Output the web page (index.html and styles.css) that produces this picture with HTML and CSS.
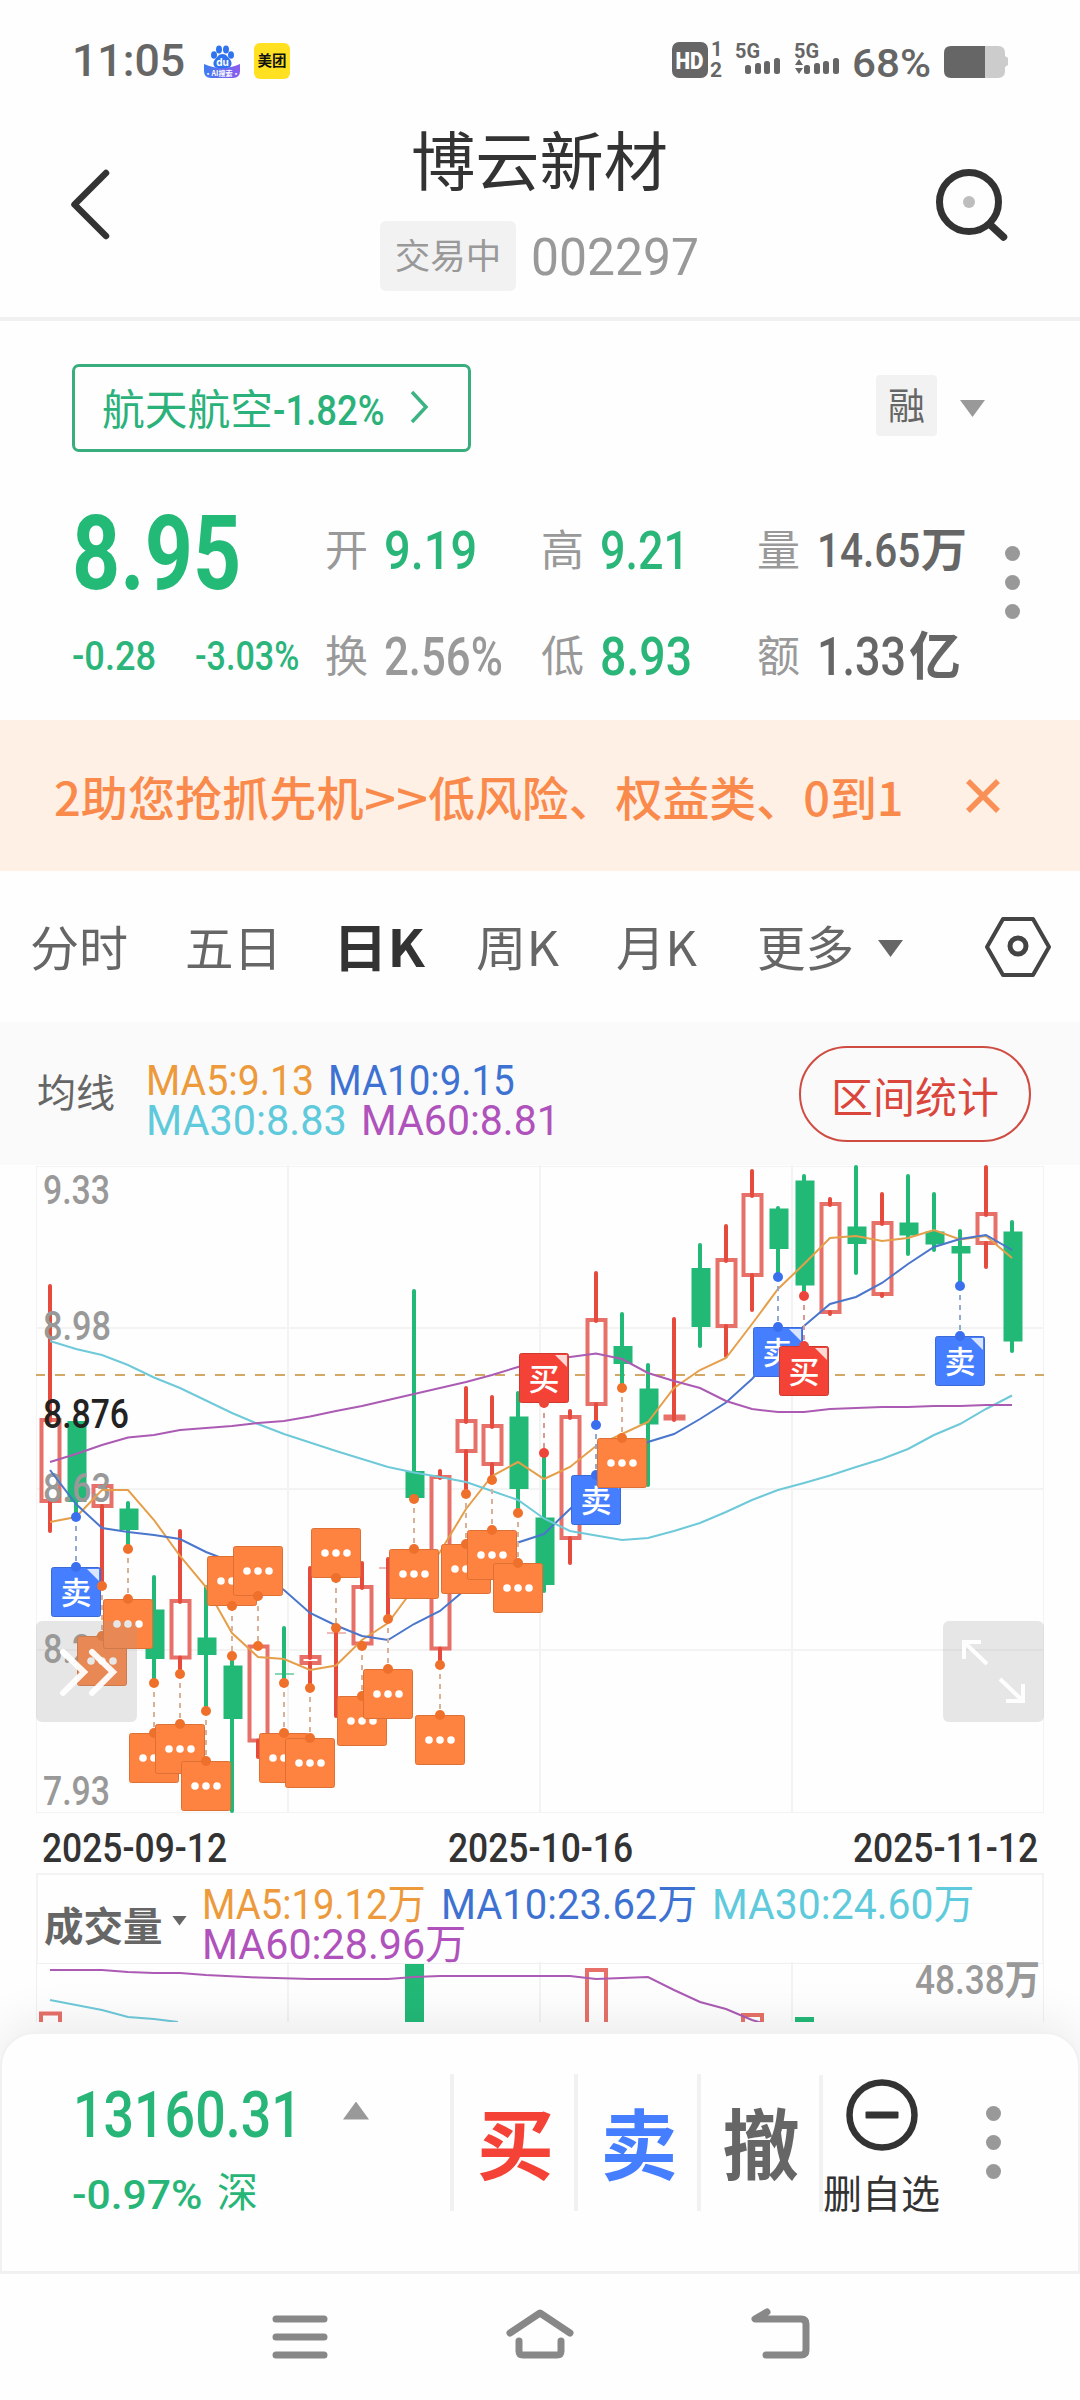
FILE: index.html
```html
<!DOCTYPE html>
<html lang="zh-CN">
<head>
<meta charset="utf-8">
<title>博云新材 002297</title>
<link rel="stylesheet" href="styles.css">
</head>
<body>
<div class="status">
  <div class="status-left">
    <span class="clock" data-w="113">11:05</span>
    <svg class="app-baidu" width="38" height="38" viewBox="0 0 38 38">
      <defs><linearGradient id="bd" x1="0" x2="1"><stop offset="0" stop-color="#3f7cf0"/><stop offset="1" stop-color="#8a5cf0"/></linearGradient></defs>
      <path d="M1 22q18 8 36 0v7q0 7-7 7H8q-7 0-7-7z" fill="url(#bd)"/>
      <g fill="#2f74ee"><ellipse cx="11" cy="13" rx="3" ry="3.8"/><ellipse cx="16" cy="7.500" rx="3" ry="4"/><ellipse cx="23" cy="7.500" rx="3" ry="4"/><ellipse cx="28" cy="13" rx="3" ry="3.800"/><path d="M19.500 12c4 0 5 3 7.500 5.500 3 3.500 1.500 8.500-3 8.500h-9c-4.500 0-6-5-3-8.500 2.500-2.500 3.500-5.500 7.500-5.500z"/></g>
      <text class="du" x="19.500" y="23.500" text-anchor="middle">du</text>
      <text class="ai" x="19" y="34" text-anchor="middle">·AI搜索·</text>
    </svg>
    <span class="app-meituan">美团</span>
  </div>
  <svg class="status-right" width="352" height="60" viewBox="670 30 352 60">
    <rect x="672" y="42" width="36" height="36" rx="7" fill="#666"/>
    <g class="sig-text">
      <text class="hd" x="675.500" y="69" textLength="28" lengthAdjust="spacingAndGlyphs">HD</text>
      <text class="sub" x="711" y="56">1</text><text class="sub" x="710" y="77" textLength="12" lengthAdjust="spacingAndGlyphs">2</text>
      <text class="fiveg" x="735" y="58" textLength="25" lengthAdjust="spacingAndGlyphs">5G</text>
      <text class="fiveg" x="794" y="58" textLength="25" lengthAdjust="spacingAndGlyphs">5G</text>
      <text class="batt" x="852" y="77" textLength="79" lengthAdjust="spacingAndGlyphs">68%</text>
    </g>
    <g fill="#666">
      <rect x="745" y="65" width="6" height="9" rx="2.500"/><rect x="755" y="63" width="6" height="11" rx="2.500"/><rect x="764" y="61" width="6" height="13" rx="2.500"/><rect x="774" y="58" width="6" height="16" rx="2.500"/>
      <path d="M795 65l4-6 4 6zM795 68h8l-4 6z"/>
      <rect x="804" y="65" width="6" height="9" rx="2.500"/><rect x="814" y="63" width="6" height="11" rx="2.500"/><rect x="823" y="61" width="6" height="13" rx="2.500"/><rect x="833" y="58" width="6" height="16" rx="2.500"/>
    </g>
    <path d="M985 46h13q7 0 7 7v3l3 2v7l-3 2v4q0 7-7 7h-13z" fill="#ccc"/>
    <path d="M985 46v32h-34q-7 0-7-7V53q0-7 7-7z" fill="#666"/>
  </svg>
</div>

<header class="header">
  <svg width="50" height="80" viewBox="66 165 50 80"><path d="M106 174L74.500 205.500L106 237" fill="none" stroke="#333" stroke-width="6.500" stroke-linecap="round" stroke-linejoin="round"/></svg>
  <div class="heading">
    <h1 class="title" data-w="257">博云新材</h1>
    <div class="code-row"><span class="tag">交易中</span><span class="code" data-w="168">002297</span></div>
  </div>
  <svg width="76" height="80" viewBox="932 164 76 80"><g fill="none" stroke="#333"><circle cx="969" cy="202" r="29.500" stroke-width="7"/><path d="M990.500 225l13 12" stroke-width="7.500" stroke-linecap="round"/></g><circle cx="969" cy="202" r="6" fill="#bdbdbd"/></svg>
</header>

<section class="quote">
  <div class="sector-row">
    <div class="sector"><span data-w="171">航天航空</span><b class="num" data-w="112">-1.82%</b>
      <svg width="22" height="38" viewBox="0 0 22 38"><path d="M3 4l14 15L3 34" fill="none" stroke="#3db384" stroke-width="3.500"/></svg></div>
    <div class="margin-flag"><span>融</span><i class="tri-down"></i></div>
  </div>
  <div class="quote-grid">
    <div class="price num" data-w="169">8.95</div>
    <div class="stat"><label>开</label><b class="num up" data-w="93">9.19</b></div>
    <div class="stat"><label>高</label><b class="num up" data-w="89">9.21</b></div>
    <div class="stat"><label>量</label><b class="num vol" data-w="103">14.65</b><b class="unit">万</b></div>
    <div class="change"><b class="num" data-w="84">-0.28</b><b class="num" data-w="104">-3.03%</b></div>
    <div class="stat"><label>换</label><b class="num mute" data-w="119">2.56%</b></div>
    <div class="stat"><label>低</label><b class="num up" data-w="92">8.93</b></div>
    <div class="stat"><label>额</label><b class="num amt" data-w="89">1.33</b><b class="unit big">亿</b></div>
    <div class="dots quote-dots"><i></i><i></i><i></i></div>
  </div>
</section>

<section class="notice">
  <div class="notice-text"><span data-w="310">2助您抢抓先机</span><span data-w="64">&gt;&gt;</span><span data-w="476">低风险、权益类、0到1</span></div>
  <svg width="38" height="38" viewBox="0 0 38 38"><path d="M4 4l30 30M34 4L4 34" stroke="#f99055" stroke-width="5.500"/></svg>
</section>

<nav class="tabs">
  <span data-w="98">分时</span><span data-w="97">五日</span><span class="active" data-w="92">日K</span><span data-w="83">周K</span><span class="month" data-w="81">月K</span><span class="more" data-w="97">更多</span><i class="tri-down dark"></i>
  <svg width="70" height="64" viewBox="0 0 70 64"><path d="M20 4h30l16 28-16 28H20L4 32z" fill="none" stroke="#444" stroke-width="4" stroke-linejoin="round"/><circle cx="35" cy="31" r="8" fill="none" stroke="#444" stroke-width="5"/></svg>
</nav>

<section class="ma-bar">
  <span class="ma-name">均线</span>
  <div class="ma-list">
    <div><span class="c5" data-w="168">MA5:9.13</span><span class="c10" data-w="187">MA10:9.15</span></div>
    <div><span class="c30" data-w="201">MA30:8.83</span><span class="c60" data-w="199">MA60:8.81</span></div>
  </div>
  <span class="range-btn">区间统计</span>
</section>

<svg id="kline" width="1080" height="653" viewBox="0 1165 1080 653"></svg>
<div class="dates"><span class="num" data-w="185">2025-09-12</span><span class="num" data-w="185">2025-10-16</span><span class="num" data-w="185">2025-11-12</span></div>

<section class="vol-head">
  <b class="vol-name">成交量</b><i class="tri-down small"></i>
  <div class="ma-list">
    <div><span class="c5" data-w="224">MA5:19.12万</span><span class="c10" data-w="256">MA10:23.62万</span><span class="c30" data-w="262">MA30:24.60万</span></div>
    <div><span class="c60" data-w="264">MA60:28.96万</span></div>
  </div>
</section>
<svg id="volume" width="1080" height="60" viewBox="0 1962 1080 60"></svg>

<footer class="trade">
  <div class="index">
    <div class="index-top"><b class="num" data-w="229">13160.31</b><i class="tri-up"></i></div>
    <div class="index-sub"><b class="num" data-w="130">-0.97%</b><span>深</span></div>
  </div>
  <div class="act buy">买</div>
  <div class="act sell">卖</div>
  <div class="act cancel">撤</div>
  <div class="fav">
    <svg width="74" height="74" viewBox="0 0 74 74"><circle cx="37" cy="37" r="32.500" fill="none" stroke="#333" stroke-width="6.500"/><rect x="20.500" y="33.500" width="33" height="7" rx="1" fill="#333"/></svg>
    <span>删自选</span>
  </div>
  <div class="dots"><i></i><i></i><i></i></div>
</footer>

<nav class="sysnav">
  <svg width="600" height="70" viewBox="240 2300 600 70" fill="none" stroke="#888" stroke-width="7" stroke-linecap="round" stroke-linejoin="round">
    <path d="M276 2319h48M276 2337h48M276 2355h48"/>
    <path d="M510 2333l30-20 30 20" /><path d="M519 2341v10q0 4 4 4h34q4 0 4-4v-10"/>
    <path d="M767 2312l-12 7h46q5 0 5 5v26q0 5-5 5h-35"/>
  </svg>
</nav>
<script src="app.js"></script>
</body>
</html>
```
FILE: styles.css
```css
* { box-sizing: border-box; }
body {
  margin: 0; width: 1080px; height: 2400px; overflow: hidden; background: #fefefe;
  font-family: Roboto, "Noto Sans CJK SC", sans-serif; color: #666;
}
svg { display: block; flex: none; }
i { font-style: normal; }
b { font-weight: 500; }
.num { font-family: Roboto, sans-serif; font-weight: 500; }
.fit { display: inline-block; flex: none; white-space: nowrap; }
.fit > span { display: inline-block; transform-origin: left center; }

.status { height: 94px; padding: 30px 58px 0 72px; display: flex; justify-content: space-between; align-items: flex-start; }
.status-left { display: flex; align-items: flex-start; padding-top: 10px; }
.clock { font-size: 45px; line-height: 40px; font-weight: 500; margin-top: 1px; }
.app-baidu { margin: 2px 0 0 18px; }
.du { font: 700 10px Inter, sans-serif; fill: #fff; }
.ai { font: 700 7px "Noto Sans CJK SC", sans-serif; fill: #fff; }
.app-meituan { width: 36px; height: 36px; margin: 3px 0 0 13px; border-radius: 6px; background: #ffe122; color: #111; font: 700 14.5px/33px "Noto Sans CJK SC", sans-serif; text-align: center; }
.sig-text { fill: #666; font-family: Roboto, sans-serif; font-weight: 700; }
.sig-text .hd { fill: #fff; font-size: 24px; font-weight: 900; }
.sig-text .sub { font-size: 20px; }
.sig-text .fiveg { font-size: 20px; }
.sig-text .batt { font-size: 38px; font-weight: 500; }

.header { height: 227px; padding: 0 72px 4px 66px; border-bottom: 4px solid #f1f1f1; display: flex; justify-content: space-between; align-items: center; }
.heading { align-self: flex-start; padding-top: 28px; display: flex; flex-direction: column; align-items: center; margin-left: 31px; }
.title { margin: 0; font-size: 64px; line-height: 84px; font-weight: 400; color: #333; }
.code-row { display: flex; align-items: center; gap: 15px; margin-top: 15px; height: 70px; }
.tag { width: 136px; height: 70px; border-radius: 6px; background: #f2f2f2; color: #999; font-size: 35.5px; line-height: 73px; text-align: center; }
.code { font-size: 51px; line-height: 70px; color: #999; margin-top: 3px; }

.quote { height: 399px; padding: 43px 0 0 72px; }
.sector-row { display: flex; justify-content: space-between; align-items: flex-start; padding-right: 95px; }
.sector { width: 399px; height: 88px; border: 3px solid #3aad7e; border-radius: 7px; padding-left: 27px; display: flex; align-items: center; color: #2bb27b; font-size: 42.5px; line-height: 84px; }
.sector > span { margin-top: 5px; }
.sector svg { margin-left: 24px; margin-top: -2px; }
.sector .num { font-size: 43px; line-height: 84px; margin-top: 4px; }
.margin-flag { display: flex; align-items: center; gap: 23px; margin-top: 11px; }
.margin-flag span { width: 61px; height: 61px; border-radius: 4px; background: #f2f2f2; font-size: 37px; line-height: 66px; text-align: center; }
.tri-down { flex: none; width: 25px; height: 17px; background: #999; clip-path: polygon(0 0, 100% 0, 50% 100%); }
.margin-flag .tri-down { margin-top: 6px; }
.tri-down.dark { background: #666; margin-top: 4px; }
.tri-down.small { width: 15px; height: 10px; background: #666; }
.tri-up { width: 26px; height: 18px; background: #999; clip-path: polygon(50% 0, 100% 100%, 0 100%); }
.quote-grid { padding-top: 45px; display: grid; grid-template-columns: 253px 216px 216px 246px 30px; grid-template-rows: 106px 106px; align-items: center; }
.price { color: #23b977; font-size: 103px; line-height: 106px; font-weight: 700; margin-top: 8px; }
.change { display: flex; gap: 39px; color: #2bb57b; font-size: 41px; }
.stat { display: flex; align-items: center; line-height: 60px; }
.stat label { font-size: 43px; color: #999; width: 59px; margin-top: 1px; }
.stat .num { font-size: 54px; margin-top: 1px; }
.stat .up { color: #2ab679; }
.stat .mute { color: #999; }
.stat .vol { font-size: 48px; margin-left: 1px; }
.stat .amt { margin-left: 1px; }
.unit { font-size: 46px; font-weight: 700; margin-left: 1px; }
.unit.big { font-size: 52px; margin-left: 3px; margin-top: 4px; }
.dots { display: flex; flex-direction: column; gap: 14px; align-items: center; }
.dots i { width: 15px; height: 15px; border-radius: 50%; background: #999; }
.quote-dots { grid-column: 5; grid-row: 1 / 3; margin-top: -41px; padding-right: 12px; }

.notice { height: 151px; background: #fff0e6; padding: 0 78px 0 54px; display: flex; align-items: center; justify-content: space-between; color: #f98a4c; font: 500 46.5px/70px "Noto Sans CJK SC", sans-serif; }
.notice-text { display: flex; margin-top: 1px; }

.tabs { height: 151px; padding: 0 27px 0 30px; display: flex; align-items: center; font: 400 48px/70px "Noto Sans CJK SC", sans-serif; }
.tabs > span { margin-right: 57px; margin-top: -4px; }
.tabs > span:nth-child(2) { margin-right: 51px; }
.tabs > .active { font-weight: 700; font-size: 51px; color: #333; margin-right: 51px; }
.tabs > .month { margin-right: 60px; }
.tabs > .more { margin-right: 24px; }
.tabs svg { margin-left: auto; }

.ma-bar { height: 143px; background: #fafafa; padding: 0 49px 0 37px; display: flex; align-items: center; }
.ma-name { font-size: 39px; width: 109px; margin-top: -7px; }
.ma-list { font-size: 42px; line-height: 40px; }
.ma-list > div { display: flex; gap: 14px; height: 40px; }
.ma-bar .ma-list { padding-top: 15px; }
.c5 { color: #ec9a3c; }
.c10 { color: #3e72d2; }
.c30 { color: #5fcadb; }
.c60 { color: #b052bb; }
.range-btn { margin-left: auto; width: 232px; height: 96px; border: 2px solid #cf4c43; border-radius: 48px; color: #db463c; font-size: 42px; line-height: 101px; text-align: center; }

.dates { height: 55px; padding: 6px 42px 0 42px; display: flex; justify-content: space-between; color: #333; font-size: 40px; line-height: 49px; }
.vol-head { height: 89px; margin: 0 36px; border: 2px solid #f3f3f3; border-bottom: 0; display: flex; align-items: center; }
.vol-name { font-size: 39.5px; font-weight: 700; width: 127px; padding-left: 6px; margin-top: 9px; white-space: nowrap; }
.vol-head .tri-down { margin: 4px 15px 0 7px; }
.vol-head .ma-list { padding-top: 10px; height: 87px; }
.vol-head .ma-list > div { gap: 15px; }

.trade { position: relative; margin-top: 10px; height: 242px; border: 2px solid #f1f1f1; border-bottom-width: 3px; border-radius: 34px 34px 0 0; background: #fefefe; box-shadow: 0 -6px 50px rgba(0, 0, 0, .09); display: flex; padding: 41px 0 0 0; }
.index { width: 448px; padding-left: 72px; color: #27b678; }
.index-top { display: flex; align-items: center; gap: 40px; font-size: 65px; height: 80px; line-height: 80px; }
.index-top .num { margin-left: -1px; }
.index-top .tri-up { margin-top: -9px; margin-left: 1px; }
.index-sub { display: flex; align-items: center; gap: 15px; font-size: 51px; height: 76px; line-height: 76px; margin-left: -2px; }
.index-sub span { font-size: 41px; }
.act { width: 124px; height: 137px; border-left: 4px solid #f1f1f1; text-align: center; font: 700 77px/133px "Noto Sans CJK SC", sans-serif; margin-top: -1px; padding-left: 3px; }
.sell { width: 123px; }
.cancel { width: 122px; padding-left: 2px; }
.buy { color: #f44336; }
.sell { color: #457eff; }
.cancel { color: #666; }
.fav { width: 121px; height: 137px; border-left: 4px solid #f1f1f1; display: flex; flex-direction: column; align-items: center; font-size: 39px; color: #333; white-space: nowrap; }
.fav span { line-height: 58px; margin-top: 14px; }
.fav svg { margin: 3px 0 0; }
.trade .dots { margin-left: 46px; height: 73px; margin-top: 31px; }
.sysnav { position: relative; background: #fefefe; height: 126px; display: flex; justify-content: center; padding-top: 26px; }

.lbl { font: 500 40px Roboto, sans-serif; fill: #999; }
.lbl.now { fill: #222; }
.mk { font: 500 31px "Noto Sans CJK SC", sans-serif; fill: #fff; }
.lbl .wan { font-family: "Noto Sans CJK SC", sans-serif; font-weight: 700; }
```
FILE: app.js
```js
// Condense text to its column width: data-w holds the width in px.
document.querySelectorAll('[data-w]').forEach(el => {
  const inner = document.createElement('span');
  inner.textContent = el.textContent;
  el.textContent = '';
  el.appendChild(inner);
  el.classList.add('fit');
  const w = +el.dataset.w;
  inner.style.transform = `scaleX(${w / inner.offsetWidth})`;
  el.style.width = w + 'px';
});

const X = i => 50 + 26 * i;
const GREEN = '#22b977', WICK_R = '#e64a3d', BODY_R = '#e77168';

// [rising, high, bodyTop, bodyBottom, low]
const candles = [
  [1,1286,1418,1503,1531],[0,1421,1421,1502,1514],[1,1486,1484,1508,1586],[0,1503,1508.5,1530,1549],
  [0,1577,1609.5,1659,1683],[1,1531,1599,1659.5,1674],[0,1587,1637.5,1655,1711],[0,1658,1665.5,1719,1811],
  [1,1646,1644.5,1742.5,1757],[0,1628,1673,1675,1683],[1,1568,1655,1665,1687],[1,1630,1632,1634,1716],
  [1,1563,1585,1645.5,1645],[1,1559,1567,1569,1618],[0,1291,1471,1498,1499],[1,1471,1475,1650.5,1665],
  [1,1388,1419,1453,1494],[1,1397,1424,1466,1480],[0,1393,1416.5,1489,1513],[0,1453,1517.5,1585,1591],
  [1,1411,1415,1540,1563],[1,1273,1318,1406,1425],[0,1314,1346,1364,1388],[0,1365,1388.5,1424.5,1485],
  [1,1319,1414.5,1420.5,1420],[0,1245,1268,1327,1346],[1,1226,1258,1328,1356],[1,1171,1193,1277,1310],
  [0,1208,1208.5,1249,1277],[0,1176,1180.5,1285.5,1296],[1,1199,1202,1314,1314],[0,1167,1226.5,1244,1273],
  [1,1194,1221,1296,1296],[0,1176,1222.5,1235.5,1254],[0,1194,1231.5,1244.5,1250],[0,1231,1246,1253.5,1286],
  [1,1167,1212,1245,1267],[0,1222,1231.5,1341.5,1351]
];

const averages = [
  ['#e59f4a', [1522,1517,1490,1490,1520,1556,1587,1633,1657,1659,1670,1665.5,1640,1623,1588,1552,1509,1476,1462,1479,1467,1446,1434,1422,1388,1370,1358,1324,1289,1264,1238,1236,1241,1238,1230,1239.5,1236,1258]],
  ['#4a76cc', [1470,1504,1528,1532,1535,1539,1552,1562,1572,1590,1613,1625.5,1636,1640,1624,1611,1589,1562,1542.5,1534,1509,1485,1460,1442,1434,1419,1402.5,1379,1350,1326,1304,1297,1283,1264,1247,1239,1235,1250]],
  ['#6ec9d9', [1341,1349,1355,1365,1377.5,1388,1400.5,1413,1424,1434,1442.5,1451,1459,1467,1472.5,1477,1482,1491,1500,1518.5,1531,1535.5,1540,1538,1531,1523,1512,1500,1490,1483,1475.5,1467,1459,1449,1435,1424,1409,1395.5]],
  ['#ab5bb3', [1462,1454,1445,1437.5,1435,1430,1428,1426,1423,1421,1416.5,1411,1406,1400,1394,1388,1382,1375,1367,1361,1357,1353.5,1359,1373,1381,1388,1401,1409,1412,1412,1409,1408,1407,1407,1406,1406,1405,1405]]
];

// [index, kind, y of the price dot, 1 when the flag sits above]
const markers = [
  [1,'s',1517],[2,'n',1586],[3,'n',1549],[4,'n',1683],[5,'n',1674],[6,'n',1711],[7,'n',1656,1],[8,'n',1646,1],
  [9,'n',1683],[10,'n',1688],[11,'n',1628,1],[12,'n',1646],[13,'n',1619],[14,'n',1499],[15,'n',1665],[16,'n',1494],
  [17,'n',1480],[18,'n',1513],[19,'b',1453,1],[21,'s',1425],[22,'n',1388],[28,'s',1277],[29,'b',1296],[35,'s',1286]
];
const kinds = {
  n: { fill: '#ff8340', edge: '#dd7035', dot: '#ee702b', dash: '#d9b196' },
  s: { fill: '#457eff', edge: '#3c6bd8', dot: '#3a70ee', dash: '#92a9cf', text: '卖' },
  b: { fill: '#f44336', edge: '#cf3a30', dot: '#ee453a', dash: '#d99a94', text: '买' }
};

const grid = (y1, y2) => [288, 540, 792].map(x => `<path d="M${x} ${y1}V${y2}" stroke="#f3f3f3" stroke-width="2"/>`).join('');
const poly = (pts, c) => `<polyline points="${pts}" fill="none" stroke="${c}" stroke-width="2"/>`;
const label = (y, t, w, cls = '') => `<text class="lbl ${cls}" x="43" y="${y}" textLength="${w}" lengthAdjust="spacingAndGlyphs">${t}</text>`;

let s = `<rect x="36.500" y="1166.500" width="1007" height="646" fill="none" stroke="#f3f3f3"/>` + grid(1165, 1813);
[1328, 1489, 1650].forEach(y => s += `<path d="M36 ${y}H1044" stroke="#f3f3f3" stroke-width="2"/>`);
s += `<path d="M36 1375H1044" stroke="#d3a765" stroke-width="2" stroke-dasharray="10 10" stroke-dashoffset="1"/>`;
candles.forEach(([up, h, t, b, l], i) => {
  const x = X(i), thin = b - t <= 2;
  if (thin) s += `<path d="M${x - 9} ${(t + b) / 2}h19" stroke="${up ? '#e9a39d' : '#5ecb9b'}" stroke-width="1.500"/>`;
  else if (!up) s += `<rect x="${x - 8.5}" y="${t}" width="19" height="${b - t}" fill="${GREEN}"/>`;
  else s += `<rect x="${x - 8.5}" y="${t + 2}" width="18" height="${b - t - 4}" fill="#fff" stroke="${BODY_R}" stroke-width="4"/>`;
  const c = up ? WICK_R : GREEN;
  const wick = (y1, y2) => s += `<path d="M${x} ${y1}V${y2}" stroke="${c}" stroke-width="4" stroke-linecap="round"/>`;
  if (thin || !up || b - t < 8) wick(h, l);
  else {
    if (h < t + 4) wick(h, t + 3);
    if (l > b - 4) wick(b - 2, l);
  }
});
[[1204,'9.33',67],[1340,'8.98',68],[1502,'8.63',68],[1663,'8.28',68],[1805,'7.93',67]].forEach(a => s += label(...a));
s += label(1428, '8.876', 86, 'now');
averages.forEach(([c, v]) => s += poly(v.map((y, i) => X(i) + ',' + y).join(' '), c));
markers.forEach(([i, k, y, above]) => {
  const x = X(i), m = kinds[k], a = above ? y - 50 : y + 50, top = above ? a - 50 : a;
  s += `<path d="M${x} ${above ? a : y + 9}V${above ? y : a}" stroke="${m.dash}" stroke-width="2" stroke-dasharray="5 5"/>`;
  s += `<circle cx="${x}" cy="${y}" r="5" fill="${m.dot}"/>`;
  s += `<rect x="${x - 24.5}" y="${top + .5}" width="49" height="49" rx="2" fill="${m.fill}" stroke="${m.edge}"/>`;
  if (m.text) s += `<path d="M${x + 11} ${top + 2}h12v12z" fill="#fff" opacity=".8"/><text class="mk" x="${x}" y="${top + 36.5}" text-anchor="middle">${m.text}</text>`;
  else [-11, 0, 11].forEach(d => s += `<circle cx="${x + d}" cy="${top + 25}" r="3.800" fill="#fff"/>`);
  s += `<circle cx="${x}" cy="${a}" r="5" fill="${m.dot}"/>`;
});
s += `<g fill="#999" fill-opacity=".24"><rect x="36" y="1621" width="101" height="101" rx="6"/><rect x="943" y="1621" width="101" height="101" rx="6"/></g>`;
s += `<g fill="none" stroke="#fff" stroke-width="4" stroke-opacity=".95"><path stroke-width="6" stroke-linecap="round" d="M63 1652l21 20-21 21M92 1652l21 20-21 21"/><path d="M964 1659v-17h17M964 1642l23 22M1023 1684v17h-17M1023 1701l-23-22"/></g>`;
document.getElementById('kline').innerHTML = s;

let v = `<path d="M36.500 1962V2022M1043.500 1962V2022M36 1963.500H1044" stroke="#f0f0f0" fill="none"/>` + grid(1962, 2022);
const redBar = (i, y) => `<rect x="${X(i) - 9}" y="${y + 2}" width="19" height="90" fill="#fff" stroke="${BODY_R}" stroke-width="4"/>`;
const greenBar = (i, y) => `<rect x="${X(i) - 9}" y="${y}" width="19" height="90" fill="${GREEN}"/>`;
v += redBar(0, 2011.5) + greenBar(14, 1964) + redBar(21, 1968) + redBar(27, 2013) + greenBar(29, 2017);
v += poly('50,2000 102,2010 128,2017 154,2019 178,2022', '#6ec9d9');
v += poly('50,1970 102,1970 128,1972 154,1973 180,1973 206,1975 258,1977.5 310,1979 388,1979 414,1977 440,1976 570,1976 596,1979 648,1977 674,1990 700,2002 726,2009 752,2020 762,2023', '#ab5bb3');
v += `<text class="lbl" x="915" y="1994" textLength="125" lengthAdjust="spacingAndGlyphs">48.38<tspan class="wan">万</tspan></text>`;
document.getElementById('volume').innerHTML = v;
```
